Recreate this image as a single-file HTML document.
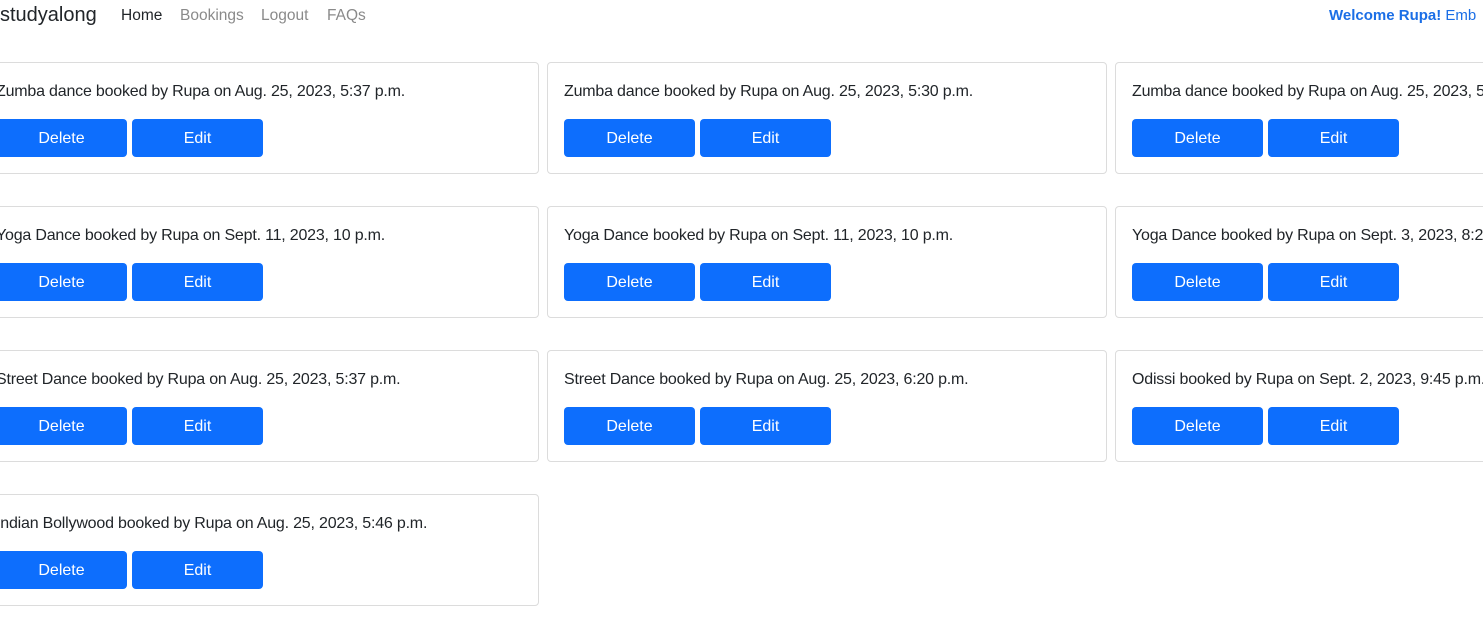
<!DOCTYPE html>
<html><head><style>
*{box-sizing:border-box;margin:0;padding:0}
body{width:1483px;height:632px;overflow:hidden;background:#fff;font-family:"Liberation Sans",sans-serif;color:#212529;position:relative}
.brand{position:absolute;left:0;top:4px;font-size:20px;color:#212529}
.nav{position:absolute;top:7px;font-size:15.5px;color:#8a8a8a}
.welcome{position:absolute;left:1329px;top:7px;font-size:15px;color:#1a6ee6;white-space:nowrap}
.card{position:absolute;width:560px;height:112px;border:1px solid #dcdcdc;border-radius:4px;overflow:hidden}
.card p{position:absolute;left:16px;top:20px;font-size:16px;white-space:nowrap;letter-spacing:-0.2px}
.btn{position:absolute;top:56px;width:131px;height:38px;background:#0d6efd;color:#fff;border-radius:4px;font-size:16px;text-align:center;line-height:40px}
.d{left:16px}.e{left:152px}
</style></head><body>
<div class="brand">studyalong</div>
<div class="nav" style="left:121px;color:#212529">Home</div>
<div class="nav" style="left:180px">Bookings</div>
<div class="nav" style="left:261px">Logout</div>
<div class="nav" style="left:327px">FAQs</div>
<div class="welcome"><b>Welcome Rupa!</b> Emb</div>

<div class="card" style="left:-21px;top:62px"><p>Zumba dance booked by Rupa on Aug. 25, 2023, 5:37 p.m.</p><div class="btn d">Delete</div><div class="btn e">Edit</div></div>
<div class="card" style="left:547px;top:62px"><p>Zumba dance booked by Rupa on Aug. 25, 2023, 5:30 p.m.</p><div class="btn d">Delete</div><div class="btn e">Edit</div></div>
<div class="card" style="left:1115px;top:62px"><p>Zumba dance booked by Rupa on Aug. 25, 2023, 5:30 p.m.</p><div class="btn d">Delete</div><div class="btn e">Edit</div></div>

<div class="card" style="left:-21px;top:206px"><p>Yoga Dance booked by Rupa on Sept. 11, 2023, 10 p.m.</p><div class="btn d">Delete</div><div class="btn e">Edit</div></div>
<div class="card" style="left:547px;top:206px"><p>Yoga Dance booked by Rupa on Sept. 11, 2023, 10 p.m.</p><div class="btn d">Delete</div><div class="btn e">Edit</div></div>
<div class="card" style="left:1115px;top:206px"><p>Yoga Dance booked by Rupa on Sept. 3, 2023, 8:20 p.m.</p><div class="btn d">Delete</div><div class="btn e">Edit</div></div>

<div class="card" style="left:-21px;top:350px"><p>Street Dance booked by Rupa on Aug. 25, 2023, 5:37 p.m.</p><div class="btn d">Delete</div><div class="btn e">Edit</div></div>
<div class="card" style="left:547px;top:350px"><p>Street Dance booked by Rupa on Aug. 25, 2023, 6:20 p.m.</p><div class="btn d">Delete</div><div class="btn e">Edit</div></div>
<div class="card" style="left:1115px;top:350px"><p>Odissi booked by Rupa on Sept. 2, 2023, 9:45 p.m.</p><div class="btn d">Delete</div><div class="btn e">Edit</div></div>

<div class="card" style="left:-21px;top:494px"><p>Indian Bollywood booked by Rupa on Aug. 25, 2023, 5:46 p.m.</p><div class="btn d">Delete</div><div class="btn e">Edit</div></div>
</body></html>
